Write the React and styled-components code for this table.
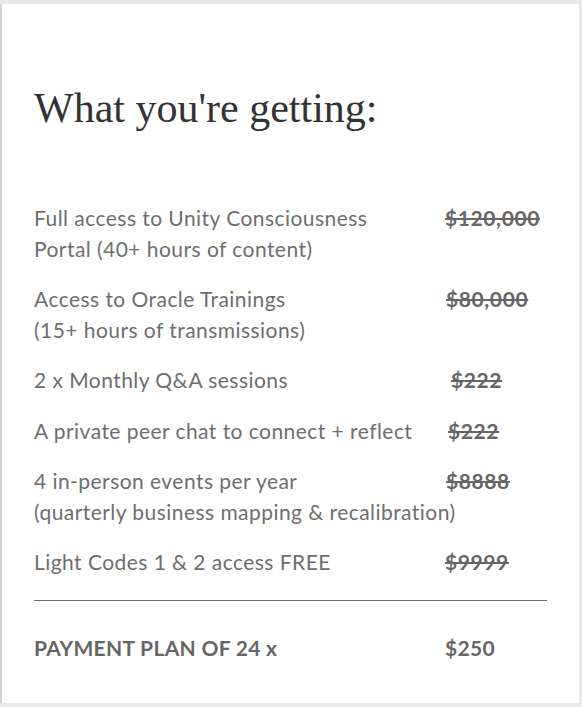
import React from "react";
import styled, { createGlobalStyle } from "styled-components";

// Offer card: what the member receives, each with its struck-out value

const items = [
  { label: "Full access to Unity Consciousness", sub: "Portal (40+ hours of content)", price: "$120,000", shift: 0 },
  { label: "Access to Oracle Trainings", sub: "(15+ hours of transmissions)", price: "$80,000", shift: 1 },
  { label: "2 x Monthly Q&A sessions", price: "$222", shift: 6 },
  { label: "A private peer chat to connect + reflect", price: "$222", shift: 3 },
  { label: "4 in-person events per year", sub: "(quarterly business mapping & recalibration)", price: "$8888", shift: 1 },
  { label: "Light Codes 1 & 2 access FREE", price: "$9999", shift: 0 },
];

const GlobalStyle = createGlobalStyle`
  html, body {
    margin: 0;
    padding: 0;
    background: #e9e9e9;
  }
  body {
    padding: 4px 3px 4px 0;
  }
`;

const Card = styled.section`
  box-sizing: border-box;
  height: 699px;
  background: #fff;
  border-left: 2px solid #d0d0d0;
  padding: 0 32px 0 32px;
  display: flex;
  flex-direction: column;
`;

const Title = styled.h2`
  margin: 78px 0 0;
  font-family: "Liberation Serif", "DejaVu Serif", serif;
  font-weight: 400;
  font-size: 42px;
  line-height: 52px;
  color: #333;
`;

const List = styled.div`
  margin-top: 68px;
  display: flex;
  flex-direction: column;
  gap: 19.2px;
`;

const Row = styled.div`
  display: grid;
  grid-template-columns: 411px auto;
  font-family: Lato, "Liberation Sans", sans-serif;
  font-size: 21px;
  letter-spacing: 0.45px;
  line-height: 31px;
  color: #6e6e6e;
`;

const Label = styled.span`
  white-space: nowrap;
`;

const Sub = styled.span`
  grid-column: 1 / -1;
  white-space: nowrap;
`;

const Price = styled.s`
  font-weight: 700;
  color: #666;
  padding-left: ${(p) => p.$shift || 0}px;
  letter-spacing: 0.6px;
  text-decoration-thickness: 2px;
`;

const Divider = styled.hr`
  margin: 23px 0 0;
  border: 0;
  border-top: 1px solid #6e6e6e;
`;

const Total = styled.div`
  margin-top: 31px;
  display: grid;
  grid-template-columns: 411px auto;
  font-family: Lato, "Liberation Sans", sans-serif;
  font-weight: 700;
  font-size: 21px;
  letter-spacing: 0.3px;
  line-height: 31px;
  color: #666;
`;

const App = () => (
  <>
    <GlobalStyle />
    <Card>
      <Title>What you're getting:</Title>
      <List>
        {items.map((item) => (
          <Row key={item.label}>
            <Label>{item.label}</Label>
            <Price $shift={item.shift}>{item.price}</Price>
            {item.sub && <Sub>{item.sub}</Sub>}
          </Row>
        ))}
      </List>
      <Divider />
      <Total>
        <span>PAYMENT PLAN OF 24 x</span>
        <span>$250</span>
      </Total>
    </Card>
  </>
);

export default App;
